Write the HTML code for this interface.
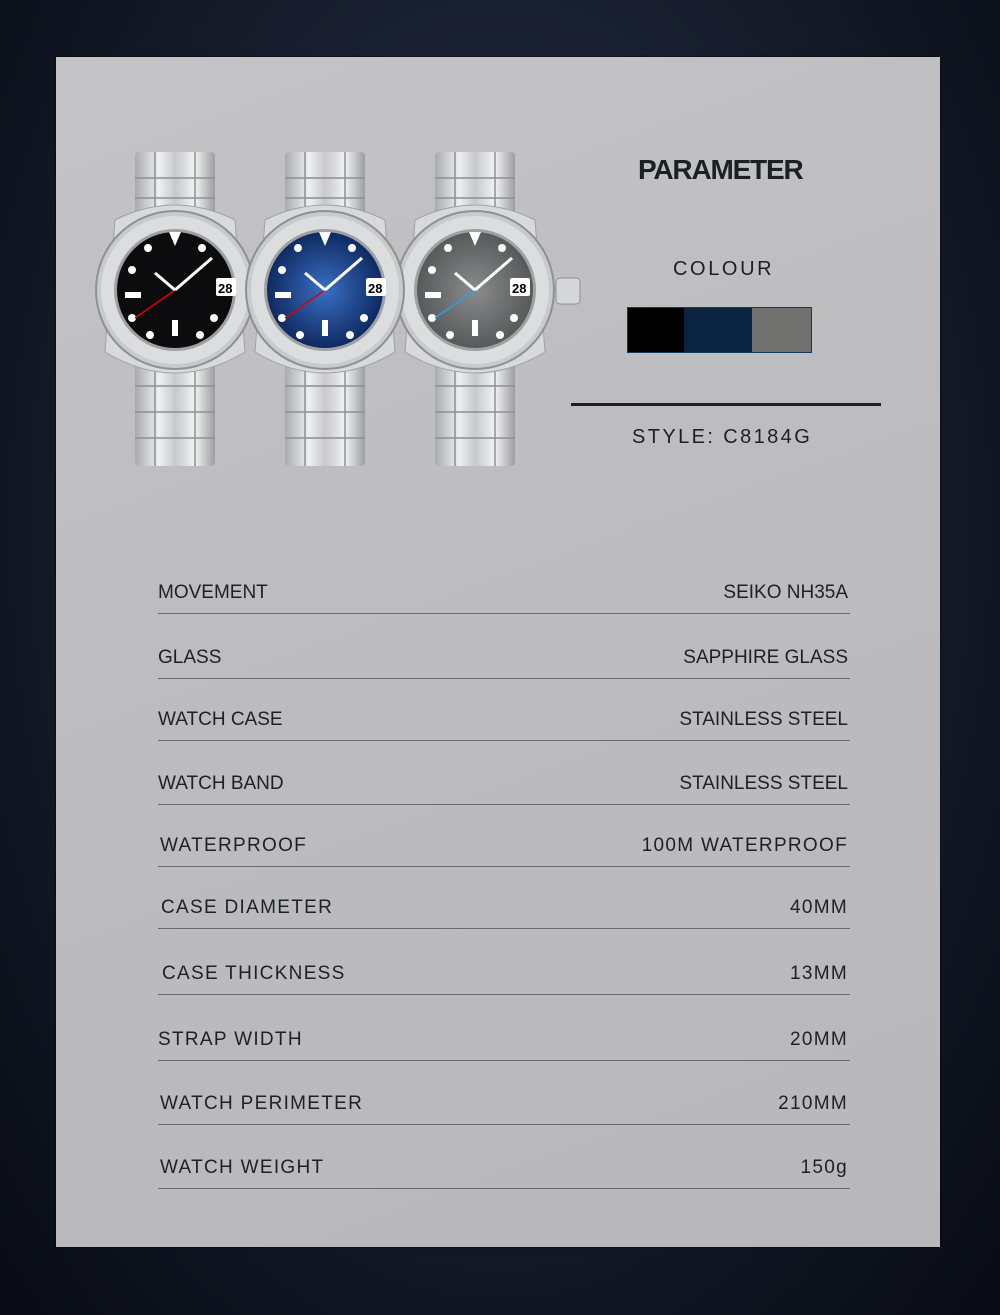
<!DOCTYPE html>
<html><head><meta charset="utf-8"><style>
body{margin:0;width:1000px;height:1315px;overflow:hidden;background:radial-gradient(ellipse at 50% 40%,#2a3448 0%,#141a28 60%,#080b14 100%);font-family:"Liberation Sans",sans-serif;position:relative}
.panel{position:absolute;left:56px;top:57px;width:884px;height:1190px;background:linear-gradient(160deg,#c4c4c6 0%,#bdbdbf 40%,#b8b8ba 100%);box-shadow:0 0 2px #000}
.t{position:absolute;color:#1d1f24}
.row{position:absolute;left:158px;width:692px;border-bottom:1.5px solid #6a6a6e;height:30px;font-size:19px;color:#1e2026}
.row span{position:absolute;bottom:9px}
.row .r{right:2px}
</style></head><body>
<div class="panel"></div>
<svg style="position:absolute;left:0;top:0" width="1000" height="1315">
<defs>
<linearGradient id="steel" x1="0" x2="1"><stop offset="0" stop-color="#a9abae"/><stop offset=".3" stop-color="#eeeff0"/><stop offset=".5" stop-color="#c8c9cb"/><stop offset=".75" stop-color="#f2f2f3"/><stop offset="1" stop-color="#9b9da0"/></linearGradient>
<radialGradient id="blue"><stop offset="0" stop-color="#3a6fc4"/><stop offset="1" stop-color="#0f2a62"/></radialGradient>
<radialGradient id="grey"><stop offset="0" stop-color="#8a8b8d"/><stop offset="1" stop-color="#58595b"/></radialGradient>
<g id="w">
<rect x="-40" y="-138" width="80" height="314" fill="url(#steel)" rx="4"/>
<g stroke="#8d8f92" stroke-width="1.5"><line x1="-40" y1="-112" x2="40" y2="-112"/><line x1="-40" y1="-92" x2="40" y2="-92"/><line x1="-40" y1="96" x2="40" y2="96"/><line x1="-40" y1="122" x2="40" y2="122"/><line x1="-40" y1="148" x2="40" y2="148"/><line x1="-20" y1="-138" x2="-20" y2="176"/><line x1="20" y1="-138" x2="20" y2="176"/></g>
<path d="M-60,-70 Q0,-100 60,-70 L70,62 Q0,104 -70,62 Z" fill="#d8d9db" stroke="#a0a1a4"/>
<circle r="79" fill="#c9cacc" stroke="#8f9093" stroke-width="2"/>
<circle r="74" fill="#dcdddf"/>
<circle r="61" fill="#9ea0a3"/>
</g>
</defs>
<rect x="556" y="278" width="24" height="26" rx="4" fill="#d5d6d8" stroke="#8f9093"/>
<use href="#w" x="175" y="290"/>
<circle cx="175" cy="290" r="58" fill="#0c0c0e"/>
<use href="#w" x="475" y="290"/>
<circle cx="475" cy="290" r="58" fill="url(#grey)"/>
<use href="#w" x="325" y="290"/>
<circle cx="325" cy="290" r="58" fill="url(#blue)"/>
<g fill="#fff">
<circle cx="148" cy="248" r="4"/><circle cx="202" cy="248" r="4"/><circle cx="132" cy="270" r="4"/><circle cx="132" cy="318" r="4"/><circle cx="214" cy="318" r="4"/><circle cx="150" cy="335" r="4"/><circle cx="200" cy="335" r="4"/><rect x="366" y="278" width="20" height="18" rx="2"/><rect x="216" y="278" width="20" height="18" rx="2"/><rect x="510" y="278" width="20" height="18" rx="2"/>
<circle cx="298" cy="248" r="4"/><circle cx="352" cy="248" r="4"/><circle cx="282" cy="270" r="4"/><circle cx="282" cy="318" r="4"/><circle cx="364" cy="318" r="4"/><circle cx="300" cy="335" r="4"/><circle cx="350" cy="335" r="4"/>
<circle cx="448" cy="248" r="4"/><circle cx="502" cy="248" r="4"/><circle cx="432" cy="270" r="4"/><circle cx="432" cy="318" r="4"/><circle cx="514" cy="318" r="4"/><circle cx="450" cy="335" r="4"/><circle cx="500" cy="335" r="4"/>
<path d="M169,232 L181,232 L175,246Z M319,232 L331,232 L325,246Z M469,232 L481,232 L475,246Z"/>
<rect x="172" y="320" width="6" height="16"/><rect x="322" y="320" width="6" height="16"/><rect x="472" y="320" width="6" height="16"/>
<rect x="125" y="292" width="16" height="6"/><rect x="275" y="292" width="16" height="6"/><rect x="425" y="292" width="16" height="6"/>
</g>
<g stroke-width="1.5"><line x1="175" y1="290" x2="135" y2="318" stroke="#d00"/><line x1="325" y1="290" x2="285" y2="318" stroke="#d00"/><line x1="475" y1="290" x2="435" y2="318" stroke="#2aa0e0"/></g>
<g stroke="#fff" stroke-width="3"><line x1="175" y1="290" x2="212" y2="258"/><line x1="175" y1="290" x2="155" y2="273"/><line x1="325" y1="290" x2="362" y2="258"/><line x1="325" y1="290" x2="305" y2="273"/><line x1="475" y1="290" x2="512" y2="258"/><line x1="475" y1="290" x2="455" y2="273"/></g>
<g font-size="13" font-weight="bold" fill="#000"><text x="218" y="293">28</text><text x="368" y="293">28</text><text x="512" y="293">28</text></g>
<rect x="627" y="307" width="185" height="46" fill="#0e3a64"/>
<rect x="628" y="308" width="56" height="44" fill="#000"/>
<rect x="684" y="308" width="68" height="44" fill="#0b2444"/>
<rect x="752" y="308" width="59" height="44" fill="#717270"/>
<rect x="571" y="403" width="310" height="3" fill="#1d1f24"/>
</svg>
<div class="t" style="left:638px;top:154px;font-size:28px;font-weight:bold;letter-spacing:-1.2px">PARAMETER</div>
<div class="t" style="left:673px;top:258px;font-size:20px;letter-spacing:2.6px">COLOUR</div>
<div class="t" style="left:632px;top:426px;font-size:20px;letter-spacing:2.4px">STYLE: C8184G</div>
<div class="row" style="top:583px"><span>MOVEMENT</span><span class="r">SEIKO NH35A</span></div>
<div class="row" style="top:648px"><span>GLASS</span><span class="r">SAPPHIRE GLASS</span></div>
<div class="row" style="top:710px"><span>WATCH CASE</span><span class="r">STAINLESS STEEL</span></div>
<div class="row" style="top:774px"><span>WATCH BAND</span><span class="r">STAINLESS STEEL</span></div>
<div class="row" style="top:836px;letter-spacing:1.3px"><span style="left:2px">WATERPROOF</span><span class="r">100M WATERPROOF</span></div>
<div class="row" style="top:898px;letter-spacing:1.3px"><span style="left:3px">CASE DIAMETER</span><span class="r">40MM</span></div>
<div class="row" style="top:964px;letter-spacing:1.3px"><span style="left:4px">CASE THICKNESS</span><span class="r">13MM</span></div>
<div class="row" style="top:1030px;letter-spacing:1.3px"><span>STRAP WIDTH</span><span class="r">20MM</span></div>
<div class="row" style="top:1094px;letter-spacing:1.3px"><span style="left:2px">WATCH PERIMETER</span><span class="r">210MM</span></div>
<div class="row" style="top:1158px;letter-spacing:1.3px"><span style="left:2px">WATCH WEIGHT</span><span class="r">150g</span></div>
</body></html>
